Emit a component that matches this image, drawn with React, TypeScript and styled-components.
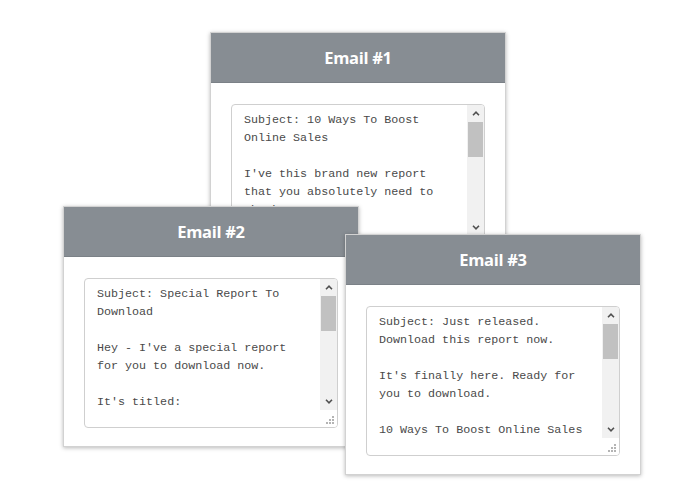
import React from "react";
import styled, { createGlobalStyle } from "styled-components";

const Global = createGlobalStyle`
  html, body { margin: 0; padding: 0; background: #ffffff; }
  body { font-family: "Open Sans", "Liberation Sans", sans-serif; }
`;

const Canvas = styled.div`
  position: relative;
  width: 700px;
  height: 500px;
  overflow: hidden;
  background: #ffffff;
`;

const Card = styled.section<{ $x: number; $y: number }>`
  position: absolute;
  left: ${(p) => p.$x}px;
  top: ${(p) => p.$y}px;
  width: 296px;
  box-sizing: border-box;
  background: #ffffff;
  border: 1px solid #d2d2d2;
  box-shadow: 0 1px 4px rgba(0, 0, 0, 0.28);
  display: flex;
  flex-direction: column;
`;

const Header = styled.header`
  height: 50px;
  box-sizing: border-box;
  background: #878d93;
  border-bottom: 1px solid #7b8187;
  display: flex;
  align-items: center;
  justify-content: center;
  color: #ffffff;
  font-family: "Open Sans", "Liberation Sans", sans-serif;
  font-weight: 700;
  font-size: 16.5px;
  letter-spacing: -0.3px;
`;

const Body = styled.div`
  padding: 21px 20px 18px 20px;
`;

const Field = styled.div`
  height: 150px;
  box-sizing: border-box;
  border: 1px solid #cfcfcf;
  border-radius: 4px;
  background: #ffffff;
  display: grid;
  grid-template-columns: 1fr 17px;
  grid-template-rows: 1fr 17px;
  overflow: hidden;
`;

const Text = styled.textarea`
  grid-row: 1 / 3;
  grid-column: 1;
  border: none;
  outline: none;
  resize: none;
  margin: 0;
  padding: 6px 10px 0 12px;
  background: transparent;
  color: #4a4a4a;
  font-family: "Liberation Mono", "Courier New", monospace;
  font-size: 11.7px;
  line-height: 18px;
  overflow: hidden;
  scrollbar-width: none;
  &::-webkit-scrollbar { display: none; }
`;

const ScrollBar = styled.div`
  grid-row: 1;
  grid-column: 2;
  background: #f1f1f1;
  display: flex;
  flex-direction: column;
`;

const ArrowButton = styled.div`
  height: 17px;
  flex: none;
  display: flex;
  align-items: center;
  justify-content: center;
`;

const Track = styled.div`
  flex: 1;
  display: flex;
  flex-direction: column;
`;

const Thumb = styled.div`
  height: 35px;
  margin: 0 1px;
  background: #c1c1c1;
`;

const Corner = styled.div`
  grid-row: 2;
  grid-column: 2;
  background: #ffffff;
  display: flex;
  align-items: flex-end;
  justify-content: flex-end;
  padding: 0 3px 3px 0;
  box-sizing: border-box;
`;

const Chevron = ({ up }: { up?: boolean }) => (
  <svg width="8" height="5" viewBox="0 0 8 5">
    <polyline
      points={up ? "1,4.2 4,1.2 7,4.2" : "1,0.8 4,3.8 7,0.8"}
      fill="none"
      stroke="#505050"
      strokeWidth="1.6"
    />
  </svg>
);

const Grip = () => (
  <svg width="8" height="8" viewBox="0 0 8 8">
    {[
      [6, 0],
      [3, 3],
      [6, 3],
      [0, 6],
      [3, 6],
      [6, 6],
    ].map(([x, y]) => (
      <rect key={`${x}-${y}`} x={x} y={y} width="2" height="2" fill="#b4b4b4" />
    ))}
  </svg>
);

type Email = { title: string; x: number; y: number; body: string };

const emails: Email[] = [
  {
    title: "Email #1",
    x: 210,
    y: 32,
    body:
      "Subject: 10 Ways To Boost Online Sales\n\nI've this brand new report that you absolutely need to check out.\n\nIt's titled:\n\n10 Ways To Boost Online Sales",
  },
  {
    title: "Email #2",
    x: 63,
    y: 206,
    body:
      "Subject: Special Report To Download\n\nHey - I've a special report for you to download now.\n\nIt's titled:\n\n10 Ways To Boost Online Sales",
  },
  {
    title: "Email #3",
    x: 345,
    y: 234,
    body:
      "Subject: Just released. Download this report now.\n\nIt's finally here. Ready for you to download.\n\n10 Ways To Boost Online Sales\n\nGrab it today.",
  },
];

const EmailCard = ({ email }: { email: Email }) => (
  <Card $x={email.x} $y={email.y}>
    <Header>{email.title}</Header>
    <Body>
      <Field>
        <Text defaultValue={email.body} spellCheck={false} />
        <ScrollBar>
          <ArrowButton>
            <Chevron up />
          </ArrowButton>
          <Track>
            <Thumb />
          </Track>
          <ArrowButton>
            <Chevron />
          </ArrowButton>
        </ScrollBar>
        <Corner>
          <Grip />
        </Corner>
      </Field>
    </Body>
  </Card>
);

export default function App() {
  return (
    <>
      <Global />
      <Canvas>
        {emails.map((e) => (
          <EmailCard key={e.title} email={e} />
        ))}
      </Canvas>
    </>
  );
}
